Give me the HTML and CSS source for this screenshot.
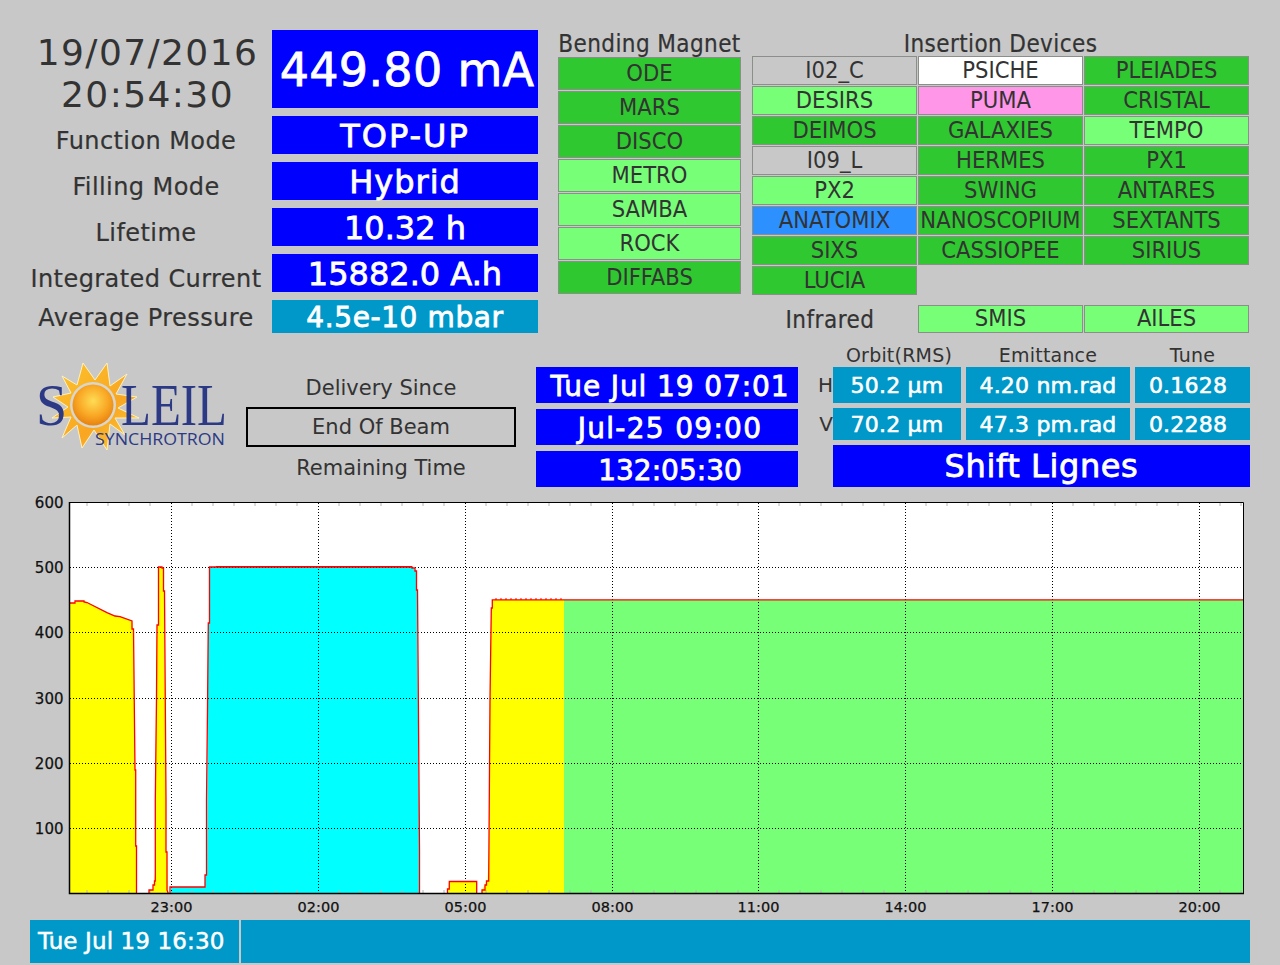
FILE: index.html
```html
<!DOCTYPE html>
<html lang="en">
<head>
<meta charset="utf-8">
<title>SOLEIL Status</title>
<link rel="stylesheet" href="styles.css">
</head>
<body>
<main class="app">
  <section class="top">
    <div class="status">
      <div class="clock">19/07/2016<br>20:54:30</div>
      <div class="val val-current">449.80 mA</div>
      <div class="label">Function Mode</div>
      <div class="val val-l val-wide">TOP-UP</div>
      <div class="label">Filling Mode</div>
      <div class="val val-l val-mid">Hybrid</div>
      <div class="label">Lifetime</div>
      <div class="val val-l">10.32 h</div>
      <div class="label">Integrated Current</div>
      <div class="val val-l">15882.0 A.h</div>
      <div class="label label-last">Average Pressure</div>
      <div class="val val-m teal">4.5e-10 mbar</div>
    </div>
    <div class="bending">
      <div class="head head-b">Bending Magnet</div>
      <div class="bm-list">
        <div class="beam green">ODE</div>
        <div class="beam green">MARS</div>
        <div class="beam green">DISCO</div>
        <div class="beam light">METRO</div>
        <div class="beam light">SAMBA</div>
        <div class="beam light">ROCK</div>
        <div class="beam green">DIFFABS</div>
      </div>
    </div>
    <div class="insertion">
      <div class="head head-i">Insertion Devices</div>
      <div class="id-grid">
        <div class="beam grey">I02_C</div>
        <div class="beam white">PSICHE</div>
        <div class="beam green">PLEIADES</div>
        <div class="beam light">DESIRS</div>
        <div class="beam pink">PUMA</div>
        <div class="beam green">CRISTAL</div>
        <div class="beam green">DEIMOS</div>
        <div class="beam green">GALAXIES</div>
        <div class="beam light">TEMPO</div>
        <div class="beam grey">I09_L</div>
        <div class="beam green">HERMES</div>
        <div class="beam green">PX1</div>
        <div class="beam light">PX2</div>
        <div class="beam green">SWING</div>
        <div class="beam green">ANTARES</div>
        <div class="beam blue">ANATOMIX</div>
        <div class="beam green">NANOSCOPIUM</div>
        <div class="beam green">SEXTANTS</div>
        <div class="beam green">SIXS</div>
        <div class="beam green">CASSIOPEE</div>
        <div class="beam green">SIRIUS</div>
        <div class="beam green">LUCIA</div>
      </div>
      <div class="ir-grid">
        <div class="ir-label">Infrared</div>
        <div class="beam light">SMIS</div>
        <div class="beam light">AILES</div>
      </div>
    </div>
  </section>

  <section class="mid">
    <div class="logo-cell">
      <svg class="logo" viewBox="30 358 216 96" width="216" height="96" role="img" aria-label="Soleil Synchrotron logo">
        <defs>
          <radialGradient id="sunCore" cx="0.5" cy="0.4" r="0.6">
            <stop offset="0" stop-color="#ffdc55"/>
            <stop offset="0.6" stop-color="#f9a825"/>
            <stop offset="1" stop-color="#e8820f"/>
          </radialGradient>
          <linearGradient id="sunRay" x1="0" y1="0" x2="1" y2="1">
            <stop offset="0" stop-color="#fcc52d"/>
            <stop offset="0.6" stop-color="#f9a622"/>
            <stop offset="1" stop-color="#fbd040"/>
          </linearGradient>
        </defs>
        <polygon class="rays" points="83,363 95,380 107,363 110,386 127,374 116,394 137,397 118,408 139,418 115,418 125,435 110,424 107,450 94,430 82,448 77,425 62,438 71,417 52,418 68,407 53,397 71,393 62,376 77,385"/>
        <circle class="ring" cx="93" cy="405" r="23"/>
        <circle cx="93" cy="405" r="20.500" fill="url(#sunCore)"/>
        <text class="logo-big" transform="translate(36 425) scale(0.95 1)">S</text>
        <text class="logo-big" transform="translate(121 425) scale(0.83 1)">LEIL</text>
        <text class="logo-small" x="95" y="445" textLength="130" lengthAdjust="spacingAndGlyphs">SYNCHROTRON</text>
      </svg>
    </div>
    <div class="delivery">
      <div class="del-text">Delivery Since</div>
      <div class="del-box">End Of Beam</div>
      <div class="del-text">Remaining Time</div>
    </div>
    <div class="times">
      <div class="val val-t val-spaced">Tue Jul 19 07:01</div>
      <div class="val val-t val-spaced2">Jul-25 09:00</div>
      <div class="val val-t">132:05:30</div>
    </div>
    <div class="orbit">
      <div></div>
      <div class="col-head col-orbit">Orbit(RMS)</div>
      <div class="col-head">Emittance</div>
      <div class="col-head">Tune</div>
      <div class="axis">H</div>
      <div class="val val-s teal">50.2 µm</div>
      <div class="val val-s teal">4.20 nm.rad</div>
      <div class="val val-s teal val-tune">0.1628</div>
      <div class="axis axis-v">V</div>
      <div class="val val-s teal">70.2 µm</div>
      <div class="val val-s teal">47.3 pm.rad</div>
      <div class="val val-s teal val-tune">0.2288</div>
      <div></div>
      <div class="val val-shift">Shift Lignes</div>
    </div>
  </section>

  <svg class="chart" viewBox="0 490 1280 430" width="1280" height="430" role="img" aria-label="Beam current over 24 hours">
    <rect class="plot" x="69" y="502" width="1174" height="392"/>

    <polygon class="f-yellow" points="69,603 75,603 77,601 84,601 87,602 107,612.700 115,616 120,616.600 132,621 133,629 135,770 136,846 137,893 69,893"/>
    <polygon class="f-yellow" points="149,893 149,890 153,890 154,881 155,873 156,700 157,625 158,625 158,567 163,568 164,591 166,800 166,852 167,852 168,893"/>
    <polygon class="f-cyan" points="171,893 171,887 205,887 205,875 207,875 207.500,710 208,623 209.500,623 209.500,567 412,567 415,570 416.500,571 417,590 418,720 419.500,850 420,893"/>
    <polygon class="f-yellow" points="448,893 449,881 477,881 477,893"/>
    <polygon class="f-yellow" points="482,893 482,890 485,885 486,882 487.500,881 489,850 490,700 491,608 492,608 492,600 564,600 564,893"/>
    <rect class="f-green" x="564" y="600" width="679" height="293"/>

    <g class="minor">
      <path d="M87 503v3M108 503v3M129 503v3M150 503v3M192 503v3M213 503v3M234 503v3M255 503v3M276 503v3M297 503v3M339 503v3M360 503v3M381 503v3M402 503v3M423 503v3M444 503v3M486 503v3M507 503v3M528 503v3M549 503v3M570 503v3M591 503v3M633 503v3M654 503v3M675 503v3M696 503v3M717 503v3M738 503v3M779 503v3M800 503v3M821 503v3M842 503v3M863 503v3M884 503v3M926 503v3M947 503v3M968 503v3M989 503v3M1010 503v3M1031 503v3M1073 503v3M1094 503v3M1115 503v3M1136 503v3M1157 503v3M1178 503v3M1220 503v3M1241 503v3"/>
      <path d="M87 890v3M108 890v3M129 890v3M150 890v3M192 890v3M213 890v3M234 890v3M255 890v3M276 890v3M297 890v3M339 890v3M360 890v3M381 890v3M402 890v3M423 890v3M444 890v3M486 890v3M507 890v3M528 890v3M549 890v3M570 890v3M591 890v3M633 890v3M654 890v3M675 890v3M696 890v3M717 890v3M738 890v3M779 890v3M800 890v3M821 890v3M842 890v3M863 890v3M884 890v3M926 890v3M947 890v3M968 890v3M989 890v3M1010 890v3M1031 890v3M1073 890v3M1094 890v3M1115 890v3M1136 890v3M1157 890v3M1178 890v3M1220 890v3M1241 890v3"/>
    </g>

    <g class="grid">
      <path d="M171.500 503V893M318.500 503V893M465.500 503V893M612.500 503V893M758.500 503V893M905.500 503V893M1052.500 503V893M1199.500 503V893"/>
      <path d="M70 567.500H1243M70 632.500H1243M70 698.500H1243M70 763.500H1243M70 828.500H1243"/>
    </g>

    <path class="trace" d="M69 603H75V601H84V602L87 602.500L107 612.700L115 616L120 616.600L132 621V629H133.500L135 770H135.700V846H136.500V894M149 894V890H153V885H154.500V881H155.300V800L156.500 700L157 625H158.500V567H162V568H163.500V591H164.500L166 800V852H167V890L168.500 894M170 894V887H205V875H206.500V800L207.500 710L208.300 623H209.500V567H412V568H415V571H416.500V590H417.500L418.500 720L419.500 850V894M447.500 894V889H449.300V881.500H476.700V894M482 894V890H485V885H486.500V881H488.700L490 700L491.300 608H492.300V599.800H1243"/>
    <path class="trace-bump" d="M495 599H562"/>
    <path class="trace-top" d="M216 566.500H412"/>

    <path class="axes" d="M69 502.500H1243.500V893"/>
    <path class="axes-main" d="M69.500 502V893.500H1244"/>

    <g class="ylab">
      <text x="63.500" y="507.500">600</text>
      <text x="63.500" y="572.500">500</text>
      <text x="63.500" y="637.500">400</text>
      <text x="63.500" y="703.500">300</text>
      <text x="63.500" y="768.500">200</text>
      <text x="63.500" y="833.500">100</text>
    </g>
    <g class="xlab">
      <text x="171.500" y="912">23:00</text>
      <text x="318.500" y="912">02:00</text>
      <text x="465.500" y="912">05:00</text>
      <text x="612.500" y="912">08:00</text>
      <text x="758.500" y="912">11:00</text>
      <text x="905.500" y="912">14:00</text>
      <text x="1052.500" y="912">17:00</text>
      <text x="1199.500" y="912">20:00</text>
    </g>
  </svg>

  <footer class="foot">
    <div class="foot-time">Tue Jul 19 16:30</div>
    <div class="foot-msg"></div>
  </footer>
</main>
</body>
</html>
```
FILE: styles.css
```css
* { box-sizing: border-box; }
html, body { margin: 0; padding: 0; }
body {
  background: #c8c8c8;
  color: #333;
  font-family: "DejaVu Sans", "Liberation Sans", sans-serif;
  overflow: hidden;
}
.app { width: 1280px; height: 965px; }

/* top */
.top { display: flex; padding: 30px 31px 0 30px; height: 345px; }
.status {
  display: grid;
  grid-template-columns: 232px 266px;
  grid-template-rows: 78px 38px 38px 38px 38px 33px;
  column-gap: 10px;
  row-gap: 8px;
  width: 508px;
  height: 303px;
  flex: none;
}
.clock {
  font-size: 36px;
  line-height: 42px;
  letter-spacing: 1.400px;
  text-align: center;
  white-space: nowrap;
  align-self: start;
  height: 78px;
  padding: 2px 0 0 3px;
}
.label {
  font-size: 24px;
  text-align: center;
  white-space: nowrap;
  padding-top: 12px;
  align-self: center;
  letter-spacing: 0.420px;
  -webkit-text-stroke: 0.2px #333;
}
.label-last { padding-top: 2px; }
.val {
  display: flex;
  align-items: center;
  justify-content: center;
  padding-top: 2px;
  background: #0000ff;
  color: #fff;
  white-space: nowrap;
  -webkit-text-stroke: 0.8px #fff;
}
.teal { background: #0098c8; }
.val-current { font-size: 46px; letter-spacing: 0.300px; padding-left: 4px; }
.val-l { font-size: 32px; }
.val-wide { letter-spacing: 2px; }
.val-mid { letter-spacing: 1px; }
.val-m { font-size: 28px; letter-spacing: 0.600px; }
.val-t { font-size: 28px; height: 36px; padding-left: 6px; }
.val-spaced { letter-spacing: 0.900px; }
.val-spaced2 { letter-spacing: 1.300px; }
.val-s { font-size: 22px; letter-spacing: 0.200px; padding-top: 0; -webkit-text-stroke: 0.6px #fff; }
.val-tune { padding-right: 9px; }
.val-shift { font-size: 32px; grid-column: 2 / 5; letter-spacing: 0.600px; padding-top: 0; }

.bending { width: 183px; margin-left: 20px; flex: none; }
.insertion { width: 497px; margin-left: 11px; flex: none; }
.head {
  font-size: 24px;
  font-stretch: condensed;
  text-align: center;
  white-space: nowrap;
  letter-spacing: 0.400px;
  -webkit-text-stroke: 0.2px #333;
}
.head-b { height: 27px; line-height: 29px; }
.head-i { height: 26px; line-height: 29px; }
.bm-list { display: grid; grid-auto-rows: 33px; row-gap: 1px; }
.id-grid {
  display: grid;
  grid-template-columns: repeat(3, 165px);
  grid-auto-rows: 29px;
  gap: 1px;
}
.ir-grid {
  display: grid;
  grid-template-columns: repeat(3, 165px);
  grid-auto-rows: 28px;
  column-gap: 1px;
  margin-top: 10px;
}
.ir-label {
  font-size: 24px;
  font-stretch: condensed;
  letter-spacing: 0.500px;
  line-height: 30px;
  text-align: center;
  padding-right: 9px;
  -webkit-text-stroke: 0.2px #333;
}
.beam {
  display: flex;
  align-items: center;
  justify-content: center;
  padding-bottom: 2px;
  font-size: 23.500px;
  font-stretch: condensed;
  white-space: nowrap;
  overflow: hidden;
  border: 1px solid #8a8f8a;
  color: #333;
}
.green { background: #30c830; }
.light { background: #78ff78; }
.grey { background: #c8c8c8; }
.white { background: #fff; }
.pink { background: #ff96e8; }
.blue { background: #2c90ff; }

/* middle */
.mid { display: flex; height: 142px; padding-left: 30px; }
.logo-cell { width: 216px; flex: none; padding-top: 13px; }
.logo { display: block; }
.rays { fill: url(#sunRay); stroke: #fff2c0; stroke-width: 1; }
.ring { fill: #d9d6cc; }
.logo-big {
  font-family: "Liberation Serif", serif;
  font-size: 59px;
  fill: #2c3a85;
}
.logo-small {
  font-family: "Open Sans", sans-serif;
  font-size: 17px;
  fill: #2c3a85;
}
.delivery {
  width: 270px;
  flex: none;
  padding-top: 22px;
  display: grid;
  grid-auto-rows: 40px;
}
.del-text {
  font-size: 21px;
  text-align: center;
  line-height: 42px;
}
.del-box {
  border: 2px solid #000;
  font-size: 21px;
  line-height: 37px;
  text-align: center;
}
.times {
  width: 262px;
  margin-left: 20px;
  padding-top: 22px;
  display: flex;
  flex-direction: column;
  gap: 6px;
  flex: none;
}
.orbit {
  margin-left: 15px;
  display: grid;
  grid-template-columns: 15px 128px 164px 115px;
  grid-template-rows: 17px 36px 32px 42px;
  gap: 5px;
  flex: none;
}
.col-head {
  font-size: 19px;
  line-height: 20px;
  letter-spacing: 0.200px;
  text-align: center;
  white-space: nowrap;
}
.col-orbit { padding-left: 4px; }
.axis {
  font-size: 20px;
  text-align: right;
  margin-right: -5px;
  line-height: 36px;
}
.axis-v { line-height: 32px; }

/* chart */
.chart { display: block; margin-top: 3px; }
.plot { fill: #fff; }
.f-yellow { fill: #ffff00; }
.f-cyan { fill: #00ffff; }
.f-green { fill: #78ff78; }
.minor path { fill: none; stroke: #b4b4b4; stroke-width: 1; }
.grid path { fill: none; stroke: #000; stroke-width: 1; stroke-dasharray: 1 2; }
.trace { fill: none; stroke: #ff0000; stroke-width: 1.300; }
.trace-bump { fill: none; stroke: #ff0000; stroke-width: 1; stroke-dasharray: 2 3; }
.trace-top { fill: none; stroke: #ff0000; stroke-width: 1; }
.axes { fill: none; stroke: #000; stroke-width: 1; }
.axes-main { fill: none; stroke: #000; stroke-width: 1.500; }
.ylab text, .xlab text {
  fill: #111;
  stroke: #111;
  stroke-width: 0.250px;
}
.xlab text { font-size: 14.500px; text-anchor: middle; }
.ylab text { font-size: 15px; text-anchor: end; }

/* footer */
.foot { display: flex; gap: 2px; margin: 0 30px; height: 43px; }
.foot-time {
  width: 209px;
  flex: none;
  background: #0098c8;
  color: #fff;
  font-size: 23px;
  line-height: 43px;
  padding-left: 8px;
  letter-spacing: 0.120px;
  white-space: nowrap;
  -webkit-text-stroke: 0.5px #fff;
}
.foot-msg { flex: 1; background: #0098c8; }
```
